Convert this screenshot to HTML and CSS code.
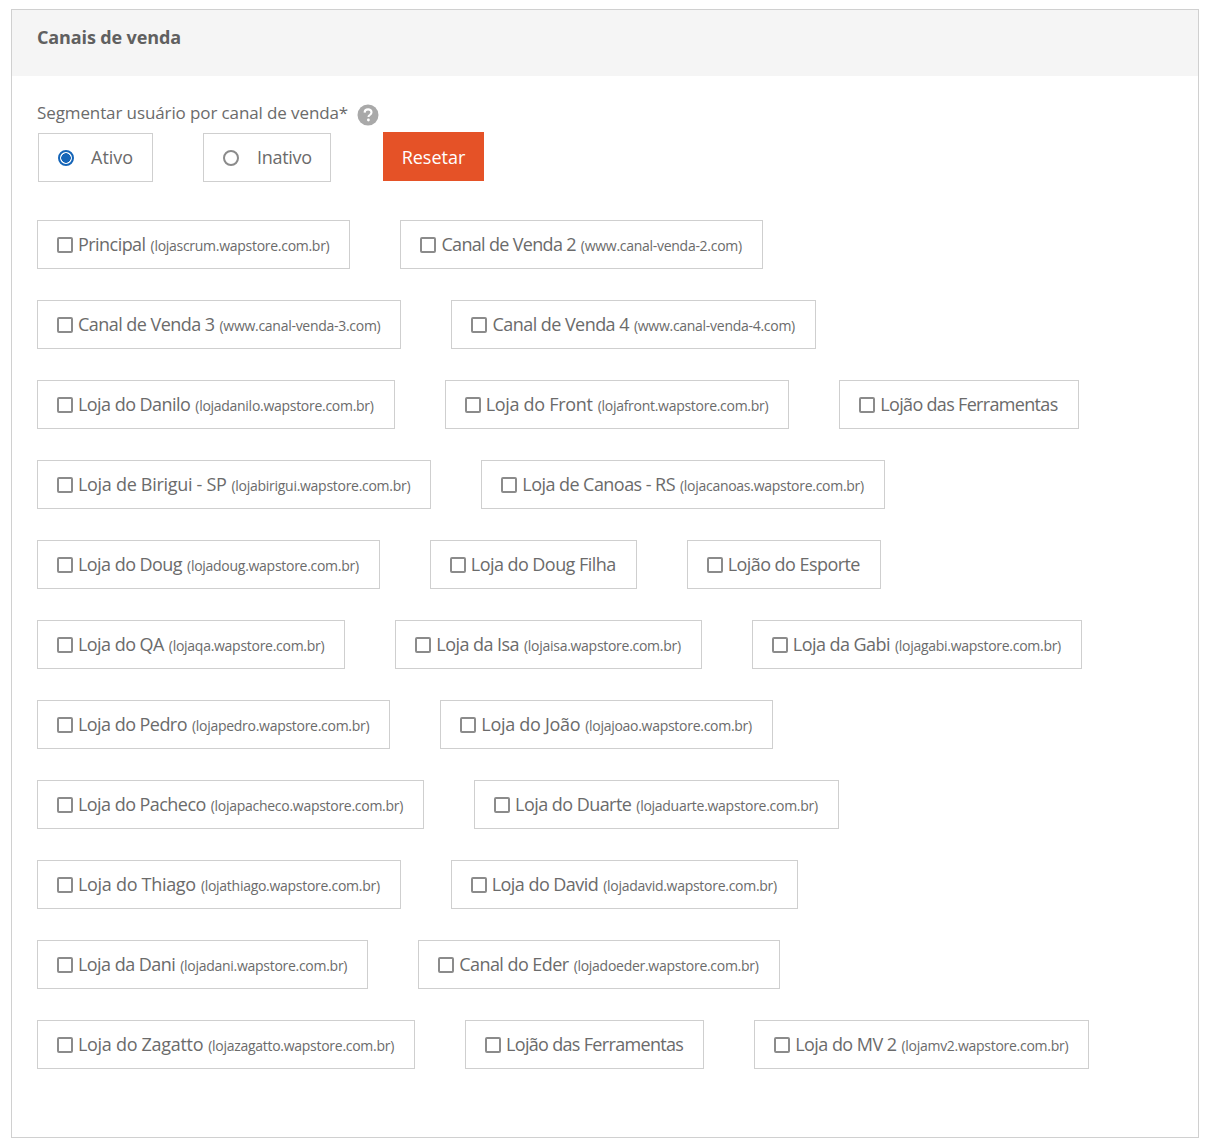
FILE: index.html
```html
<!DOCTYPE html>
<html lang="pt-BR">
<head>
<meta charset="utf-8">
<title>Canais de venda</title>
<link rel="stylesheet" href="styles.css">
</head>
<body>
<section class="panel">
  <header class="panel-head"><h2>Canais de venda</h2></header>
  <div class="panel-body">
    <div class="field-label">
      <span class="field-text">Segmentar usuário por canal de venda*</span>
      <svg class="help" viewBox="0 0 22 22" width="22" height="22" aria-hidden="true"><circle cx="11" cy="11" r="10.5" fill="#a9a9a9"/><path d="M7.6 8.6c.1-2 1.500-3.200 3.500-3.200s3.400 1.100 3.400 2.900c0 1.300-.7 2-1.700 2.700-.9.600-1.300 1-1.300 2.100" fill="none" stroke="#fff" stroke-width="2.100"/><circle cx="11.400" cy="16" r="1.400" fill="#fff"/></svg>
    </div>
    <div class="status-row">
      <label class="radio-box ativo"><span class="radio on"></span><span class="radio-text">Ativo</span></label>
      <label class="radio-box inativo"><span class="radio"></span><span class="radio-text">Inativo</span></label>
      <button class="reset" type="button">Resetar</button>
    </div>
    <div class="chips">
      <div class="row">
        <label class="chip"><span class="check"></span><span class="name">Principal</span> <small>(lojascrum.wapstore.com.br)</small></label>
        <label class="chip snug"><span class="check"></span><span class="name">Canal de Venda 2</span> <small>(www.canal-venda-2.com)</small></label>
      </div>
      <div class="row">
        <label class="chip"><span class="check"></span><span class="name">Canal de Venda 3</span> <small>(www.canal-venda-3.com)</small></label>
        <label class="chip"><span class="check"></span><span class="name">Canal de Venda 4</span> <small>(www.canal-venda-4.com)</small></label>
      </div>
      <div class="row">
        <label class="chip"><span class="check"></span><span class="name">Loja do Danilo</span> <small>(lojadanilo.wapstore.com.br)</small></label>
        <label class="chip roomy"><span class="check"></span><span class="name">Loja do Front</span> <small>(lojafront.wapstore.com.br)</small></label>
        <label class="chip snug"><span class="check"></span><span class="name">Lojão das Ferramentas</span></label>
      </div>
      <div class="row">
        <label class="chip roomy"><span class="check"></span><span class="name">Loja de Birigui - SP</span> <small>(lojabirigui.wapstore.com.br)</small></label>
        <label class="chip"><span class="check"></span><span class="name">Loja de Canoas - RS</span> <small>(lojacanoas.wapstore.com.br)</small></label>
      </div>
      <div class="row">
        <label class="chip"><span class="check"></span><span class="name">Loja do Doug</span> <small>(lojadoug.wapstore.com.br)</small></label>
        <label class="chip"><span class="check"></span><span class="name">Loja do Doug Filha</span></label>
        <label class="chip"><span class="check"></span><span class="name">Lojão do Esporte</span></label>
      </div>
      <div class="row">
        <label class="chip"><span class="check"></span><span class="name">Loja do QA</span> <small>(lojaqa.wapstore.com.br)</small></label>
        <label class="chip"><span class="check"></span><span class="name">Loja da Isa</span> <small>(lojaisa.wapstore.com.br)</small></label>
        <label class="chip"><span class="check"></span><span class="name">Loja da Gabi</span> <small>(lojagabi.wapstore.com.br)</small></label>
      </div>
      <div class="row">
        <label class="chip"><span class="check"></span><span class="name">Loja do Pedro</span> <small>(lojapedro.wapstore.com.br)</small></label>
        <label class="chip roomy"><span class="check"></span><span class="name">Loja do João</span> <small>(lojajoao.wapstore.com.br)</small></label>
      </div>
      <div class="row">
        <label class="chip"><span class="check"></span><span class="name">Loja do Pacheco</span> <small>(lojapacheco.wapstore.com.br)</small></label>
        <label class="chip"><span class="check"></span><span class="name">Loja do Duarte</span> <small>(lojaduarte.wapstore.com.br)</small></label>
      </div>
      <div class="row">
        <label class="chip roomy"><span class="check"></span><span class="name">Loja do Thiago</span> <small>(lojathiago.wapstore.com.br)</small></label>
        <label class="chip"><span class="check"></span><span class="name">Loja do David</span> <small>(lojadavid.wapstore.com.br)</small></label>
      </div>
      <div class="row">
        <label class="chip"><span class="check"></span><span class="name">Loja da Dani</span> <small>(lojadani.wapstore.com.br)</small></label>
        <label class="chip"><span class="check"></span><span class="name">Canal do Eder</span> <small>(lojadoeder.wapstore.com.br)</small></label>
      </div>
      <div class="row">
        <label class="chip roomy"><span class="check"></span><span class="name">Loja do Zagatto</span> <small>(lojazagatto.wapstore.com.br)</small></label>
        <label class="chip snug"><span class="check"></span><span class="name">Lojão das Ferramentas</span></label>
        <label class="chip"><span class="check"></span><span class="name">Loja do MV 2</span> <small>(lojamv2.wapstore.com.br)</small></label>
      </div>
    </div>
  </div>
</section>
</body>
</html>
```
FILE: styles.css
```css
* { box-sizing: border-box; }
html, body { background: #fff; }
body {
  margin: 0;
  padding: 9px 15px 7px 11px;
  font-family: "Open Sans", "Noto Sans", sans-serif;
  color: #6b6b6b;
}
.panel { border: 1px solid #d0d0d0; height: 1129px; }
.panel-head {
  background: #f5f5f5;
  height: 66px;
  padding: 15px 25px 0;
}
.panel-head h2 {
  margin: 0;
  font-size: 18px;
  line-height: 24px;
  font-weight: 700;
  letter-spacing: -0.13px;
  color: #606060;
}
.panel-body { padding: 26px 25px 0; }
.field-label {
  display: flex;
  align-items: center;
  gap: 9px;
  height: 26px;
  font-size: 17px;
  letter-spacing: -0.11px;
}
.field-text { padding-bottom: 5px; }
.status-row { display: flex; align-items: flex-start; margin: 5px 0 0 1px; }
.radio-box {
  display: flex;
  align-items: center;
  height: 49px;
  border: 1px solid #cfcfcf;
  padding-left: 19px;
  font-size: 18px;
}
.radio-text { padding-bottom: 2px; }
.ativo { width: 115px; margin-right: 50px; gap: 17px; }
.inativo { width: 128px; margin-right: 52px; gap: 18px; letter-spacing: -0.3px; }
.radio {
  width: 16px;
  height: 16px;
  border-radius: 50%;
  border: 2px solid #8b8b8b;
  background: #fff;
}
.radio.on { border-color: #1565b8; background: radial-gradient(circle, #1565b8 0 4.5px, #fff 5px); }
.reset {
  width: 101px;
  height: 49px;
  margin-top: -1px;
  border: 0;
  background: #e55227;
  color: #fff;
  font: 18px "Open Sans", "Noto Sans", sans-serif;
}
.chips { display: flex; flex-direction: column; gap: 31px; margin-top: 38px; }
.row { display: flex; gap: 50px; }
.chip {
  display: flex;
  align-items: center;
  height: 49px;
  border: 1px solid #cfcfcf;
  padding: 0 20px 0 19px;
  white-space: pre;
}
.check {
  width: 16px;
  height: 16px;
  border: 2px solid #8b8b8b;
  border-radius: 2px;
  margin-right: 5px;
  flex: none;
}
.name { font-size: 18px; letter-spacing: -0.55px; padding-bottom: 2px; }
.roomy .name { letter-spacing: -0.3px; }
.snug .name { letter-spacing: -0.68px; }
.chip small { font-size: 14px; letter-spacing: -0.28px; margin-left: 5px; padding-top: 2px; }
```
